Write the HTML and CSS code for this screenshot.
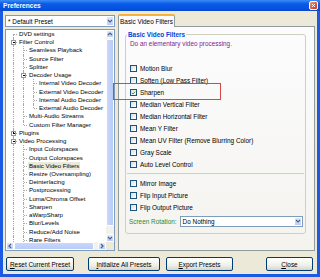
FILE: index.html
```html
<!DOCTYPE html>
<html>
  <head>
    <meta charset="UTF-8" />
    <title>Preferences</title>
    <link rel="stylesheet" href="styles.css">
  </head>
  <body>
    <div class="window">
      <div class="titlebar">
        <span>Preferences</span>
        <span class="close">
          <svg width="8" height="8" viewBox="0 0 8 8"><path d="M2.3 2.3l3.4 3.4M5.7 2.3l-3.4 3.4" stroke="#fff" stroke-width="1.1"/></svg>
        </span>
      </div>

      <div class="client">
        <div class="main">
          <!-- preset + tree -->
          <div class="left">
            <div class="combo">
              <span class="combo-text">* Default Preset</span>
              <span class="drop"><svg width="6" height="6" viewBox="0 0 6 6"><path d="M1 2l2 2 2-2" fill="none" stroke="#4d6185" stroke-width="1.2"/></svg></span>
            </div>

            <div class="tree">
              <div class="tree-body">
                <div class="node"><i class="g f"></i><span>DVD settings</span></div>
                <div class="node"><i class="g t"><b class="bx"></b></i><span>Filter Control</span></div>
                <div class="node"><i class="g v"></i><i class="g t"></i><span>Seamless Playback</span></div>
                <div class="node"><i class="g v"></i><i class="g t"></i><span>Source Filter</span></div>
                <div class="node"><i class="g v"></i><i class="g t"></i><span>Splitter</span></div>
                <div class="node"><i class="g v"></i><i class="g t"><b class="bx"></b></i><span>Decoder Usage</span></div>
                <div class="node"><i class="g v"></i><i class="g v"></i><i class="g t"></i><span>Internal Video Decoder</span></div>
                <div class="node"><i class="g v"></i><i class="g v"></i><i class="g t"></i><span>External Video Decoder</span></div>
                <div class="node"><i class="g v"></i><i class="g v"></i><i class="g t"></i><span>Internal Audio Decoder</span></div>
                <div class="node"><i class="g v"></i><i class="g v"></i><i class="g l"></i><span>External Audio Decoder</span></div>
                <div class="node"><i class="g v"></i><i class="g t"></i><span>Multi-Audio Streams</span></div>
                <div class="node"><i class="g v"></i><i class="g l"></i><span>Custom Filter Manager</span></div>
                <div class="node"><i class="g t"><b class="bx plus"></b></i><span>Plugins</span></div>
                <div class="node"><i class="g t"><b class="bx"></b></i><span>Video Processing</span></div>
                <div class="node"><i class="g v"></i><i class="g t"></i><span>Input Colorspaces</span></div>
                <div class="node"><i class="g v"></i><i class="g t"></i><span>Output Colorspaces</span></div>
                <div class="node"><i class="g v"></i><i class="g t"></i><span class="sel">Basic Video Filters</span></div>
                <div class="node"><i class="g v"></i><i class="g t"></i><span>Resize (Oversampling)</span></div>
                <div class="node"><i class="g v"></i><i class="g t"></i><span>Deinterlacing</span></div>
                <div class="node"><i class="g v"></i><i class="g t"></i><span>Postprocessing</span></div>
                <div class="node"><i class="g v"></i><i class="g t"></i><span>Luma/Chroma Offset</span></div>
                <div class="node"><i class="g v"></i><i class="g t"></i><span>Sharpen</span></div>
                <div class="node"><i class="g v"></i><i class="g t"></i><span>aWarpSharp</span></div>
                <div class="node"><i class="g v"></i><i class="g t"></i><span>Blur/Levels</span></div>
                <div class="node"><i class="g v"></i><i class="g t"></i><span>Reduce/Add Noise</span></div>
                <div class="node"><i class="g v"></i><i class="g t"></i><span>Rare Filters</span></div>
              </div>

              <div class="vscroll">
                <span class="sbtn"><svg width="6" height="6" viewBox="0 0 6 6"><path d="M1 4l2-2 2 2" fill="none" stroke="#4d6185" stroke-width="1.2"/></svg></span>
                <span class="vtrack"><span class="vthumb"></span></span>
                <span class="sbtn"><svg width="6" height="6" viewBox="0 0 6 6"><path d="M1 2l2 2 2-2" fill="none" stroke="#4d6185" stroke-width="1.2"/></svg></span>
              </div>
              <div class="hscroll">
                <span class="sbtn"><svg width="6" height="6" viewBox="0 0 6 6"><path d="M4 1L2 3l2 2" fill="none" stroke="#4d6185" stroke-width="1.2"/></svg></span>
                <span class="htrack"><span class="hthumb"></span></span>
                <span class="sbtn"><svg width="6" height="6" viewBox="0 0 6 6"><path d="M2 1l2 2-2 2" fill="none" stroke="#4d6185" stroke-width="1.2"/></svg></span>
              </div>
              <div class="corner"></div>
            </div>
          </div>

          <!-- page -->
          <div class="right">
            <div class="tabs">
              <div class="tab">Basic Video Filters</div>
            </div>
            <div class="panel">
              <fieldset class="group">
                <legend>Basic Video Filters</legend>
                <div class="desc">Do an elementary video processing.</div>

                <div class="checks">
                  <label class="cb"><i class="box"></i>Motion Blur</label>
                  <label class="cb"><i class="box"></i>Soften (Low Pass Filter)</label>
                  <label class="cb"><i class="box on"><svg width="7" height="7" viewBox="0 0 7 7"><path d="M1.3 3.4l1.5 1.6 3-3.3" fill="none" stroke="#21a121" stroke-width="1.3"/></svg></i>Sharpen</label>
                  <label class="cb"><i class="box"></i>Median Vertical Filter</label>
                  <label class="cb"><i class="box"></i>Median Horizontal Filter</label>
                  <label class="cb"><i class="box"></i>Mean Y Filter</label>
                  <label class="cb"><i class="box"></i>Mean UV Filter (Remove Blurring Color)</label>
                  <label class="cb"><i class="box"></i>Gray Scale</label>
                  <label class="cb"><i class="box"></i>Auto Level Control</label>
                </div>

                <div class="sep"></div>

                <div class="checks">
                  <label class="cb"><i class="box"></i>Mirror Image</label>
                  <label class="cb"><i class="box"></i>Flip Input Picture</label>
                  <label class="cb"><i class="box"></i>Flip Output Picture</label>
                </div>

                <div class="rotation">
                  <span class="rot-label">Screen Rotation:</span>
                  <div class="combo small">
                    <span class="combo-text">Do Nothing</span>
                    <span class="drop"><svg width="6" height="6" viewBox="0 0 6 6"><path d="M1 2l2 2 2-2" fill="none" stroke="#4d6185" stroke-width="1.2"/></svg></span>
                  </div>
                </div>
              </fieldset>
            </div>
          </div>
        </div>

        <div class="buttons">
          <button class="btn btn-reset"><u>R</u>eset Current Preset</button>
          <button class="btn btn-init"><u>I</u>nitialize All Presets</button>
          <button class="btn btn-export"><u>E</u>xport Presets</button>
          <button class="btn btn-close"><u>C</u>lose</button>
        </div>
      </div>

      <!-- red marker drawn over the screenshot -->
      <div class="marker"></div>
    </div>
  </body>
</html>
```

FILE: styles.css
```css
body {
  margin: 0;
  padding: 0;
  background: #fff;
  font-family: "Liberation Sans", Arial, sans-serif;
  font-size: 6.4px;
  color: #000;
  overflow: hidden;
}

.window {
  position: relative;
  width: 320px;
  height: 277px;
  background: #1b5be4;
  display: flex;
  flex-direction: column;
}

.titlebar {
  height: 11px;
  flex: none;
  background: linear-gradient(#3c8cf8, #0a5ae8 35%, #0554e3 70%, #0a48ca);
  display: flex;
  align-items: center;
  justify-content: space-between;
  padding: 0 2px 0 3px;
  color: #fff;
  font-weight: bold;
  font-size: 6.6px;
}

.close {
  width: 7px;
  height: 7px;
  border: 1px solid #fff;
  border-radius: 2px;
  background: linear-gradient(135deg, #f09a80, #e0562f 60%, #c8401c);
  display: flex;
  align-items: center;
  justify-content: center;
}

.close svg {
  width: 7px;
  height: 7px;
}

.client {
  flex: 1;
  margin: 0 3px 3px;
  background: #ece9d8;
  display: flex;
  flex-direction: column;
}

.main {
  display: flex;
  gap: 3px;
  padding: 3px 2px 0;
  height: 237px;
}

/* left column */
.left {
  width: 110px;
  padding-top: 1px;
  display: flex;
  flex-direction: column;
  gap: 2px;
}

.combo {
  height: 12px;
  box-sizing: border-box;
  border: 1px solid #7f9db9;
  background: #fff;
  display: flex;
  align-items: center;
  padding-left: 2px;
}

.combo-text {
  flex: 1;
}

.drop {
  width: 8px;
  height: 100%;
  box-sizing: border-box;
  border: 1px solid #fff;
  border-radius: 1px;
  background: linear-gradient(#dce8fe, #b9cdfa);
  display: flex;
  align-items: center;
  justify-content: center;
}

.tree {
  height: 222px;
  box-sizing: border-box;
  border: 1px solid #7f9db9;
  background: #fff;
  display: grid;
  grid-template-columns: 100px 8px;
  grid-template-rows: 212px 8px;
  font-size: 6.1px;
}

.tree-body {
  overflow: hidden;
  padding-left: 2px;
}

.node {
  height: 8.24px;
  line-height: 8.24px;
  display: flex;
  white-space: nowrap;
}

.node span {
  padding: 0 1px;
}

.node .sel {
  background: #ece9d8;
}

.g {
  position: relative;
  width: 10px;
  flex: none;
}

.g::before,
.g::after {
  content: "";
  position: absolute;
}

.g.v::before,
.g.t::before {
  left: 5px;
  top: 0;
  bottom: 0;
  border-left: 1px dotted #a8a8a8;
}

.g.l::before {
  left: 5px;
  top: 0;
  height: 4px;
  border-left: 1px dotted #a8a8a8;
}

.g.f::before {
  left: 5px;
  top: 4px;
  bottom: 0;
  border-left: 1px dotted #a8a8a8;
}

.g.t::after,
.g.l::after,
.g.f::after {
  left: 6px;
  right: 1px;
  top: 4px;
  border-top: 1px dotted #a8a8a8;
}

.bx {
  position: absolute;
  z-index: 1;
  left: 3px;
  top: 2px;
  width: 5px;
  height: 5px;
  box-sizing: border-box;
  border: 1px solid #919b9c;
  background: #fff;
}

.bx::before,
.bx.plus::after {
  content: "";
  position: absolute;
  background: #000;
}

.bx::before {
  left: 0.5px;
  top: 1px;
  width: 2px;
  height: 1px;
}

.bx.plus::after {
  left: 1px;
  top: 0.5px;
  width: 1px;
  height: 2px;
}

.vscroll,
.hscroll {
  display: flex;
  background: #f3f1ec;
}

.vscroll {
  flex-direction: column;
}

.sbtn {
  width: 8px;
  height: 8px;
  flex: none;
  box-sizing: border-box;
  border: 1px solid #fff;
  border-radius: 1px;
  background: linear-gradient(#dce8fe, #b9cdfa);
  display: flex;
  align-items: center;
  justify-content: center;
}

.vtrack,
.htrack {
  flex: 1;
  display: flex;
}

.vtrack {
  flex-direction: column;
  padding: 1px 0 8px;
}

.htrack {
  padding: 0 4px 0 0;
}

.vthumb,
.hthumb {
  flex: 1;
  border: 1px solid #fff;
  border-radius: 1px;
  background: linear-gradient(90deg, #c8d8fd, #b8cbf8);
}

.hthumb {
  background: linear-gradient(#c8d8fd, #b8cbf8);
}

.corner {
  background: #ece9d8;
}

/* right column */
.right {
  width: 197px;
  display: flex;
  flex-direction: column;
}

.tabs {
  height: 13px;
  display: flex;
}

.tabs::after {
  content: "";
  flex: 1;
  border-bottom: 1px solid #919b9c;
}

.tab {
  width: 57px;
  box-sizing: border-box;
  border: 1px solid #919b9c;
  border-top: 2px solid #f5b33b;
  border-bottom: none;
  border-radius: 2px 2px 0 0;
  background: #fcfcfe;
  display: flex;
  align-items: center;
  justify-content: center;
  white-space: nowrap;
}

.panel {
  flex: 1;
  border: 1px solid #919b9c;
  border-top: none;
  background: linear-gradient(#fcfcfe, #f4f3ee);
  padding: 4px 8px 0 6px;
}

.group {
  margin: 0;
  border: 1px solid #d0d0bf;
  border-radius: 3px;
  padding: 0 4px 6px;
  min-width: 0;
}

.group legend {
  margin-left: -3px;
  padding: 0 1px;
  font-weight: bold;
  color: #0046d5;
  line-height: 7px;
}

.desc {
  margin-top: 2px;
  line-height: 8px;
  color: #86228a;
}

.checks {
  display: flex;
  flex-direction: column;
}

.desc + .checks {
  margin-top: 14.5px;
}

.cb {
  height: 12px;
  display: flex;
  align-items: center;
  gap: 3px;
  white-space: nowrap;
}

.box {
  width: 7px;
  height: 7px;
  box-sizing: border-box;
  border: 1px solid #1c5180;
  background: linear-gradient(135deg, #dcdcd7, #fff);
  display: flex;
  align-items: center;
  justify-content: center;
}

.box svg {
  width: 6px;
  height: 6px;
}

.sep {
  margin: 2.5px -3px 3px;
  border-top: 1px solid #d0d0bf;
}

.rotation {
  margin-top: 2px;
  height: 12px;
  display: flex;
  align-items: center;
  gap: 3px;
}

.rot-label {
  margin-left: -1px;
  color: #2e8a2e;
  white-space: nowrap;
}

.combo.small {
  flex: 1;
  height: 11px;
  margin-right: -2px;
}

/* bottom buttons */
.buttons {
  margin-top: 6px;
  display: flex;
  padding: 0 4px 0 3px;
}

.btn {
  height: 14px;
  box-sizing: border-box;
  border: 1px solid #003c74;
  border-radius: 2px;
  background: linear-gradient(#fff, #f0f0ea 60%, #d9d4c8);
  font-family: inherit;
  font-size: 6.4px;
  color: #000;
  padding: 0;
  white-space: nowrap;
}

.btn-reset {
  width: 68px;
}

.btn-init {
  width: 72px;
  margin-left: 14px;
}

.btn-export {
  width: 67px;
  margin-left: 6px;
}

.btn-close {
  width: 47px;
  margin-left: auto;
}

.marker {
  position: absolute;
  left: 113px;
  top: 83px;
  width: 108px;
  height: 17px;
  box-sizing: border-box;
  border: 1px solid #d64848;
}
```
